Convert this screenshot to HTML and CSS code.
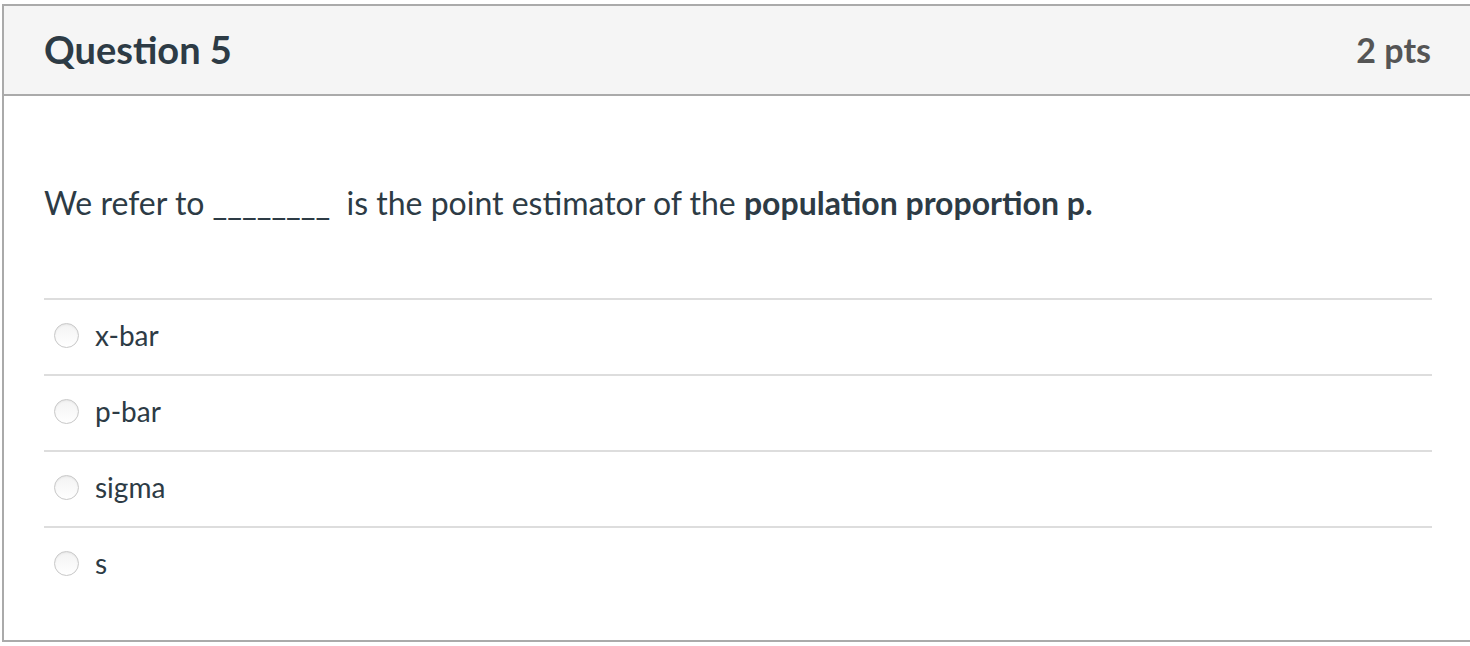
FILE: index.html
```html
<!DOCTYPE html>
<html>
<head>
<meta charset="utf-8">
<link rel="stylesheet" href="styles.css">
</head>
<body>
<div class="question">
  <div class="header">
    <h2 class="title">Question 5</h2>
    <span class="points">2 pts</span>
  </div>
  <div class="content">
    <p class="text">We refer to ________ &nbsp;is the point estimator of the <strong>population proportion p.</strong></p>
    <div class="answers">
      <label class="answer"><span class="radio"></span><span class="label">x-bar</span></label>
      <label class="answer"><span class="radio"></span><span class="label">p-bar</span></label>
      <label class="answer"><span class="radio"></span><span class="label">sigma</span></label>
      <label class="answer"><span class="radio"></span><span class="label">s</span></label>
    </div>
  </div>
</div>
</body>
</html>
```
FILE: styles.css
```css
html, body {
  margin: 0;
  padding: 0;
  background: #fff;
  overflow: hidden;
}
body {
  font-family: Lato, "Noto Sans", sans-serif;
  color: #2d3b45;
}
.question {
  margin: 4px 0 0 2px;
  border: 2px solid #aaaaaa;
  border-right: none;
}
.header {
  height: 88px;
  background: #f5f5f5;
  border-bottom: 2px solid #aaaaaa;
  display: flex;
  align-items: center;
  justify-content: space-between;
  padding: 0 39px 2px 40px;
  box-sizing: border-box;
  height: 90px;
}
.title {
  margin: 0;
  font-size: 38px;
  font-weight: 700;
  color: #2d3b45;
}
.points {
  font-size: 34px;
  font-weight: 700;
  color: #555555;
}
.content {
  padding: 0 38px 38px 40px;
}
.text {
  margin: 0;
  padding: 87px 0 75px 0;
  font-size: 32px;
  line-height: 40px;
}
.text strong {
  font-weight: 700;
}
.answer {
  display: flex;
  align-items: center;
  height: 74px;
  box-sizing: border-box;
  padding-bottom: 4px;
  border-top: 2px solid #dddddd;
  height: 76px;
}
.radio {
  width: 23px;
  height: 23px;
  border-radius: 50%;
  border: 1px solid #c8c8c8;
  background: linear-gradient(#f3f3f3, #ffffff);
  box-shadow: inset 0 1px 2px rgba(0,0,0,0.06);
  margin-left: 10px;
  flex-shrink: 0;
}
.label {
  margin-left: 16px;
  font-size: 28px;
}
```
